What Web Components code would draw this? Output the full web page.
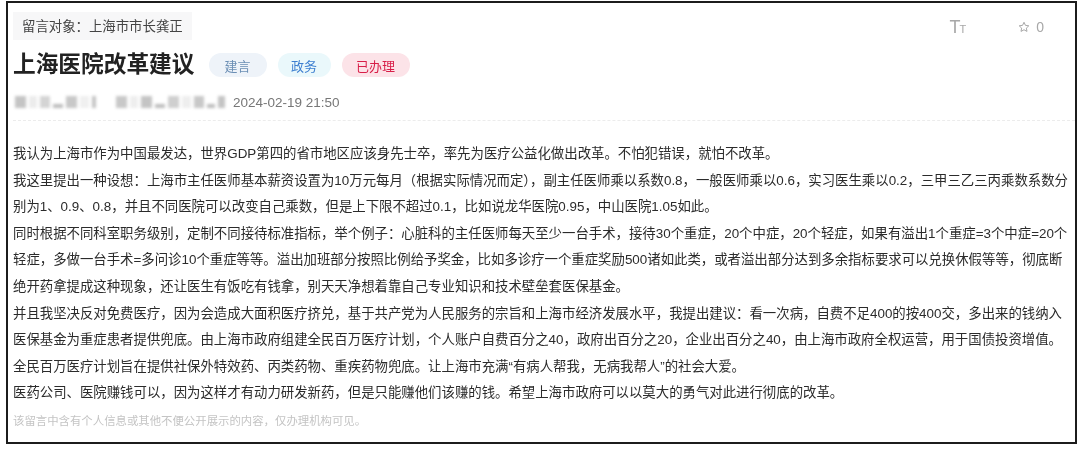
<!DOCTYPE html>
<html lang="zh">
<head>
<meta charset="utf-8">
<style>
  html, body { margin: 0; background: #fff; }
  body { width: 1080px; height: 450px; overflow: hidden; font-family: "Liberation Sans", "Noto Sans CJK SC", sans-serif; }
</style>
</head>
<body>
<message-card>
  <message-head slot="head"></message-head>
  <message-body slot="body"></message-body>
</message-card>

<script>
class MessageCard extends HTMLElement {
  connectedCallback() {
    this.attachShadow({ mode: 'open' });
    this.shadowRoot.innerHTML = `
      <style>
        :host { display: block; box-sizing: border-box; width: 1071px; height: 443px; margin: 1px 0 0 6px; border: 2px solid #1c1c1c; padding: 9px 0 0 5px; background: #fff; filter: blur(.3px); }
        .rule { height: 0; border-top: 1px dashed #ececec; }
      </style>
      <slot name="head"></slot>
      <div class="rule"></div>
      <slot name="body"></slot>
    `;
  }
}

class TagPill extends HTMLElement {
  connectedCallback() {
    this.attachShadow({ mode: 'open' });
    this.shadowRoot.innerHTML = `
      <style>
        :host { display: inline-flex; align-items: center; justify-content: center; height: 24px; border-radius: 12px; font-size: 13px; box-sizing: border-box; }
      </style>
      <slot></slot>
    `;
  }
}

// the name in the reference is blurred out, so this is only grey smudges
class BlurredName extends HTMLElement {
  connectedCallback() {
    this.attachShadow({ mode: 'open' });
    const bits = (this.getAttribute('bits') || '').split(' ').map(b => {
      const [w, c, low] = b.split(':');
      return `<i style="width:${w}px;background:${c};${low ? 'height:4px;align-self:flex-end' : ''}"></i>`;
    }).join('');
    this.shadowRoot.innerHTML = `
      <style>
        :host { display: flex; gap: 3px; height: 12px; filter: blur(1.800px); }
        i { display: block; height: 12px; }
      </style>
      ${bits}
    `;
  }
}

class MessageHead extends HTMLElement {
  connectedCallback() {
    this.attachShadow({ mode: 'open' });
    this.shadowRoot.innerHTML = `
      <style>
        :host { display: block; height: 108px; position: relative; }
        .target { display: inline-flex; align-items: center; box-sizing: border-box; height: 28px; padding: 0 9px 2px 9px; background: #f7f7f8; font-size: 13.400px; color: #444; }
        .title-row { display: flex; align-items: center; margin-top: 10px; height: 30px; }
        h1 { margin: 0 14px 2px 0; font-size: 22.700px; line-height: 28px; font-weight: 700; color: #222; }
        .tags { display: flex; gap: 11px; }
        .meta { display: flex; align-items: center; height: 20px; margin-top: 12px; font-size: 13.500px; color: #777; }
        .tools { position: absolute; top: 0; right: 0; height: 30px; display: flex; align-items: center; color: #a8a8a8; }
        .tt { font-size: 18px; margin-right: 53px; letter-spacing: -1px; line-height: 1; }
        .tt small { font-size: 11px; }
        .star { display: flex; align-items: center; gap: 6px; font-size: 14px; margin-right: 31px; }
      </style>
      <div class="target">留言对象：上海市市长龚正</div>
      <div class="title-row">
        <h1>上海医院改革建议</h1>
        <div class="tags">
          <tag-pill style="width:58px;background:#eef3f9;color:#6c8fb5">建言</tag-pill>
          <tag-pill style="width:53px;background:#eaf8fb;color:#3d7fd0">政务</tag-pill>
          <tag-pill style="width:68px;background:#fce3e8;color:#d81e48">已办理</tag-pill>
        </div>
      </div>
      <div class="meta">
        <blurred-name style="margin-left:2px" bits="11:#c4c4c4 8:#ececec 10:#d4d4d4 10:#bdbdbd:low 11:#c8c8c8 9:#f0f0f0 4:#c4c4c4"></blurred-name>
        <blurred-name style="margin-left:20px" bits="11:#c8c8c8 8:#eeeeee 11:#c4c4c4 10:#bdbdbd:low 11:#cfcfcf 9:#eeeeee 10:#c8c8c8 8:#bdbdbd:low 7:#c4c4c4"></blurred-name>
        <span style="margin-left:8px">2024-02-19 21:50</span>
      </div>
      <div class="tools">
        <span class="tt">T<small>T</small></span>
        <span class="star">
          <svg width="12" height="12" viewBox="0 0 24 24" fill="none" stroke="#a8a8a8" stroke-width="2" stroke-linejoin="round"><path d="M12 2.500l2.900 6.200 6.700.9-4.900 4.600 1.300 6.600L12 17.500l-6 3.300 1.300-6.600-4.900-4.600 6.700-.9z"/></svg>
          <span>0</span>
        </span>
      </div>
    `;
  }
}

class MessageBody extends HTMLElement {
  connectedCallback() {
    this.attachShadow({ mode: 'open' });
    this.shadowRoot.innerHTML = `
      <style>
        :host { display: block; padding-top: 20px; font-size: 13.400px; line-height: 26.600px; color: #2b2b2b; }
        p { margin: 0; white-space: nowrap; }
        .note { margin-top: 1px; font-size: 11.400px; color: #c4c4c4; }
      </style>
      <p>我认为上海市作为中国最发达，世界GDP第四的省市地区应该身先士卒，率先为医疗公益化做出改革。不怕犯错误，就怕不改革。</p>
      <p>我这里提出一种设想：上海市主任医师基本薪资设置为10万元每月（根据实际情况而定），副主任医师乘以系数0.8，一般医师乘以0.6，实习医生乘以0.2，三甲三乙三丙乘数系数分<br>别为1、0.9、0.8，并且不同医院可以改变自己乘数，但是上下限不超过0.1，比如说龙华医院0.95，中山医院1.05如此。</p>
      <p>同时根据不同科室职务级别，定制不同接待标准指标，举个例子：心脏科的主任医师每天至少一台手术，接待30个重症，20个中症，20个轻症，如果有溢出1个重症=3个中症=20个<br>轻症，多做一台手术=多问诊10个重症等等。溢出加班部分按照比例给予奖金，比如多诊疗一个重症奖励500诸如此类，或者溢出部分达到多余指标要求可以兑换休假等等，彻底断<br>绝开药拿提成这种现象，还让医生有饭吃有钱拿，别天天净想着靠自己专业知识和技术壁垒套医保基金。</p>
      <p>并且我坚决反对免费医疗，因为会造成大面积医疗挤兑，基于共产党为人民服务的宗旨和上海市经济发展水平，我提出建议：看一次病，自费不足400的按400交，多出来的钱纳入<br>医保基金为重症患者提供兜底。由上海市政府组建全民百万医疗计划，个人账户自费百分之40，政府出百分之20，企业出百分之40，由上海市政府全权运营，用于国债投资增值。</p>
      <p>全民百万医疗计划旨在提供社保外特效药、丙类药物、重疾药物兜底。让上海市充满“有病人帮我，无病我帮人”的社会大爱。</p>
      <p>医药公司、医院赚钱可以，因为这样才有动力研发新药，但是只能赚他们该赚的钱。希望上海市政府可以以莫大的勇气对此进行彻底的改革。</p>
      <p class="note">该留言中含有个人信息或其他不便公开展示的内容，仅办理机构可见。</p>
    `;
  }
}

customElements.define('message-card', MessageCard);
customElements.define('tag-pill', TagPill);
customElements.define('blurred-name', BlurredName);
customElements.define('message-head', MessageHead);
customElements.define('message-body', MessageBody);
</script>
</body>
</html>
